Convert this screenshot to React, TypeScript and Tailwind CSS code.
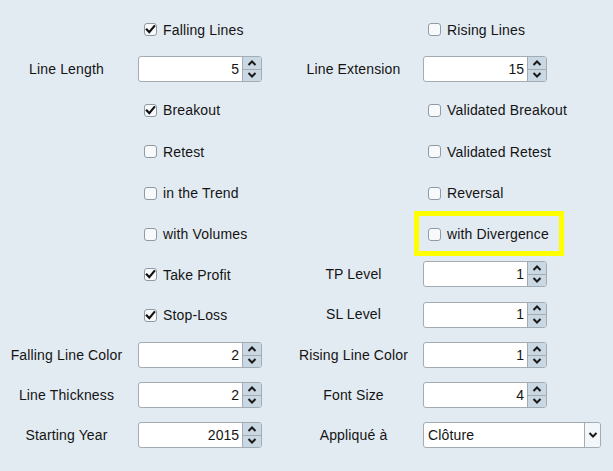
import React from "react";

const font = { fontFamily: '"Liberation Sans", Arial, sans-serif' };

function Check({ checked, label }: { checked?: boolean; label: string }) {
  return (
    <div className="flex items-center gap-[6px]">
      <div className="w-[13px] h-[13px] rounded-[3px] border border-[#8e9aa4] bg-[#f7f9fa] flex items-center justify-center">
        {checked && (
          <svg width="11" height="11" viewBox="0 0 11 11">
            <polyline points="1.8,5.6 4.3,8.2 9.2,2.2" fill="none" stroke="#111" strokeWidth="2.2" strokeLinecap="square" />
          </svg>
        )}
      </div>
      <span className="text-[14px] text-[#141414] leading-none tracking-[0.15px]">{label}</span>
    </div>
  );
}

function Chevron({ up }: { up?: boolean }) {
  return (
    <svg width="10" height="6" viewBox="0 0 10 6">
      <polyline
        points={up ? "1.5,5 5,1.5 8.5,5" : "1.5,1 5,4.5 8.5,1"}
        fill="none"
        stroke="#1a1a1a"
        strokeWidth="2"
      />
    </svg>
  );
}

function Spinner({ value }: { value: string }) {
  return (
    <div className="flex w-[124px] h-[26px] rounded-[3px] border border-[#a3acb3] bg-white overflow-hidden">
      <div className="flex-1 flex items-center justify-end pr-[3px] text-[14px] text-[#141414]">{value}</div>
      <div className="w-[19px] flex flex-col bg-[#c9d8e3] border-l border-[#a3acb3]">
        <div className="flex-1 flex items-center justify-center border-b border-[#a3acb3]">
          <Chevron up />
        </div>
        <div className="flex-1 flex items-center justify-center">
          <Chevron />
        </div>
      </div>
    </div>
  );
}

function Select({ value }: { value: string }) {
  return (
    <div className="flex w-[178px] h-[26px] rounded-[3px] border border-[#a3acb3] bg-white overflow-hidden">
      <div className="flex-1 flex items-center pl-[4px] text-[14px] text-[#141414] tracking-[0.15px]">{value}</div>
      <div className="w-[16px] flex items-center justify-center border-l border-[#a3acb3] bg-[#f4f7f9]">
        <Chevron />
      </div>
    </div>
  );
}

type Cell = { kind: "none" } | { kind: "label"; text: string } | { kind: "check"; text: string; checked?: boolean } | { kind: "spin"; value: string } | { kind: "select"; value: string };

const rows: { h: string; cells: [Cell, Cell, Cell, Cell] }[] = [
  { h: "h-[40px]", cells: [{ kind: "none" }, { kind: "check", text: "Falling Lines", checked: true }, { kind: "none" }, { kind: "check", text: "Rising Lines" }] },
  { h: "h-[40px]", cells: [{ kind: "label", text: "Line Length" }, { kind: "spin", value: "5" }, { kind: "label", text: "Line Extension" }, { kind: "spin", value: "15" }] },
  { h: "h-[41px]", cells: [{ kind: "none" }, { kind: "check", text: "Breakout", checked: true }, { kind: "none" }, { kind: "check", text: "Validated Breakout" }] },
  { h: "h-[42px]", cells: [{ kind: "none" }, { kind: "check", text: "Retest" }, { kind: "none" }, { kind: "check", text: "Validated Retest" }] },
  { h: "h-[41px]", cells: [{ kind: "none" }, { kind: "check", text: "in the Trend" }, { kind: "none" }, { kind: "check", text: "Reversal" }] },
  { h: "h-[41px]", cells: [{ kind: "none" }, { kind: "check", text: "with Volumes" }, { kind: "none" }, { kind: "check", text: "with Divergence" }] },
  { h: "h-[40px]", cells: [{ kind: "none" }, { kind: "check", text: "Take Profit", checked: true }, { kind: "label", text: "TP Level" }, { kind: "spin", value: "1" }] },
  { h: "h-[41px]", cells: [{ kind: "none" }, { kind: "check", text: "Stop-Loss", checked: true }, { kind: "label", text: "SL Level" }, { kind: "spin", value: "1" }] },
  { h: "h-[40px]", cells: [{ kind: "label", text: "Falling Line Color" }, { kind: "spin", value: "2" }, { kind: "label", text: "Rising Line Color" }, { kind: "spin", value: "1" }] },
  { h: "h-[40px]", cells: [{ kind: "label", text: "Line Thickness" }, { kind: "spin", value: "2" }, { kind: "label", text: "Font Size" }, { kind: "spin", value: "4" }] },
  { h: "h-[40px]", cells: [{ kind: "label", text: "Starting Year" }, { kind: "spin", value: "2015" }, { kind: "label", text: "Appliqué à" }, { kind: "select", value: "Clôture" }] },
];

function renderCell(c: Cell, right: boolean) {
  switch (c.kind) {
    case "none":
      return null;
    case "label":
      return <span className="text-[14px] text-[#141414] whitespace-nowrap tracking-[0.15px]">{c.text}</span>;
    case "check":
      return (
        <div className={right ? "pl-[5px] pt-[1px]" : "pl-[6px] pt-[1px]"}>
          <Check checked={c.checked} label={c.text} />
        </div>
      );
    case "spin":
      return <Spinner value={c.value} />;
    case "select":
      return <Select value={c.value} />;
  }
}

export default function App() {
  return (
    <div className="relative w-[613px] h-[471px] bg-[#e3ebf2] pt-[9px]" style={font}>
      {rows.map((r, i) => (
        <div key={i} className={`grid grid-cols-[133px_153px_135px_192px] ${r.h}`}>
          <div className="flex items-center justify-center">{renderCell(r.cells[0], false)}</div>
          <div className="flex items-center pl-[5px]">{renderCell(r.cells[1], false)}</div>
          <div className="flex items-center justify-center">{renderCell(r.cells[2], true)}</div>
          <div className="flex items-center pl-[2px]">{renderCell(r.cells[3], true)}</div>
        </div>
      ))}
      <div className="absolute left-[414px] top-[211px] w-[150px] h-[45px] border-[5px] border-[#ffff00]" />
    </div>
  );
}
